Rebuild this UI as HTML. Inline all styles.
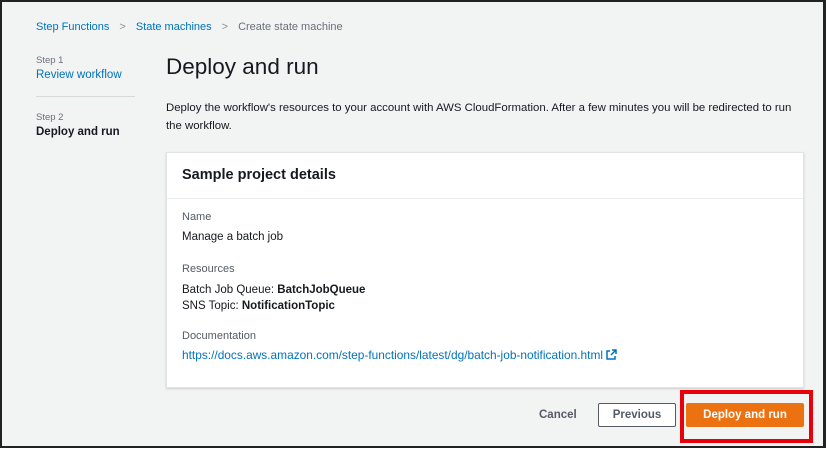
<html><head><style>
body{margin:0;width:827px;height:452px;background:#fff;font-family:"Liberation Sans",sans-serif;position:relative;overflow:hidden}
.frame{position:absolute;left:0;top:0;width:821px;height:444px;border:2px solid #222;border-right-width:3px;background:#f2f3f3}
.a{position:absolute;white-space:nowrap}
.link{color:#0073bb}
</style></head><body>
<div class="frame"></div>
<div class="a" style="left:36px;top:21px;font-size:11px"><span class="link">Step Functions</span><span style="color:#879596;margin:0 10px">&gt;</span><span class="link">State machines</span><span style="color:#879596;margin:0 10px">&gt;</span><span style="color:#687078">Create state machine</span></div>
<div class="a" style="left:36px;top:55px;font-size:9.5px;color:#687078">Step 1</div>
<div class="a link" style="left:36px;top:69px;font-size:11.5px">Review workflow</div>
<div class="a" style="left:36px;top:96px;width:99px;height:1px;background:#d5dbdb"></div>
<div class="a" style="left:36px;top:112px;font-size:9.5px;color:#687078">Step 2</div>
<div class="a" style="left:36px;top:126px;font-size:11.5px;color:#16191f;font-weight:bold">Deploy and run</div>
<div class="a" style="left:166px;top:54px;font-size:22.5px;color:#16191f">Deploy and run</div>
<div class="a" style="left:166px;top:99px;font-size:11.4px;color:#16191f;line-height:18px">Deploy the workflow's resources to your account with AWS CloudFormation. After a few minutes you will be redirected to run<br>the workflow.</div>
<div class="a" style="left:166px;top:152px;width:636px;height:234px;background:#fff;border:1px solid #e1e4e4;box-shadow:0 1px 2px rgba(0,0,0,.15)">
<div style="height:45px;border-bottom:1px solid #eaeded"></div>
<div class="a" style="left:15px;top:14px;font-size:14.5px;font-weight:bold;color:#16191f">Sample project details</div>
<div class="a" style="left:15px;top:58px;font-size:11px;color:#545b64">Name</div>
<div class="a" style="left:15px;top:78px;font-size:11.5px;color:#16191f">Manage a batch job</div>
<div class="a" style="left:15px;top:110px;font-size:11px;color:#545b64">Resources</div>
<div class="a" style="left:15px;top:129px;font-size:11.5px;color:#16191f;line-height:16px">Batch Job Queue: <b>BatchJobQueue</b><br>SNS Topic: <b>NotificationTopic</b></div>
<div class="a" style="left:15px;top:177px;font-size:11px;color:#545b64">Documentation</div>
<div class="a link" style="left:15px;top:195px;font-size:11.9px">https://docs.aws.amazon.com/step-functions/latest/dg/batch-job-notification.html <svg width="11" height="11" viewBox="0 0 11 11" style="vertical-align:-1px"><path d="M6 1h4v4M10 1L5 6M4 2H1v8h8V7" fill="none" stroke="#0073bb" stroke-width="1.5"/></svg></div>
</div>
<div class="a" style="left:539px;top:409px;font-size:11.5px;font-weight:bold;color:#545b64">Cancel</div>
<div class="a" style="left:598px;top:403px;width:78px;height:24px;border:1px solid #545b64;background:#fff;box-sizing:border-box;border-radius:2px;font-size:11.5px;font-weight:bold;color:#545b64;text-align:center;line-height:22px">Previous</div>
<div class="a" style="left:680px;top:390px;width:133px;height:53px;border:4px solid #e8000b;box-sizing:border-box"></div>
<div class="a" style="left:686px;top:403px;width:118px;height:24px;background:#ec7211;border-radius:2px;font-size:11.5px;font-weight:bold;color:#fff;text-align:center;line-height:24px">Deploy and run</div>
</body></html>
